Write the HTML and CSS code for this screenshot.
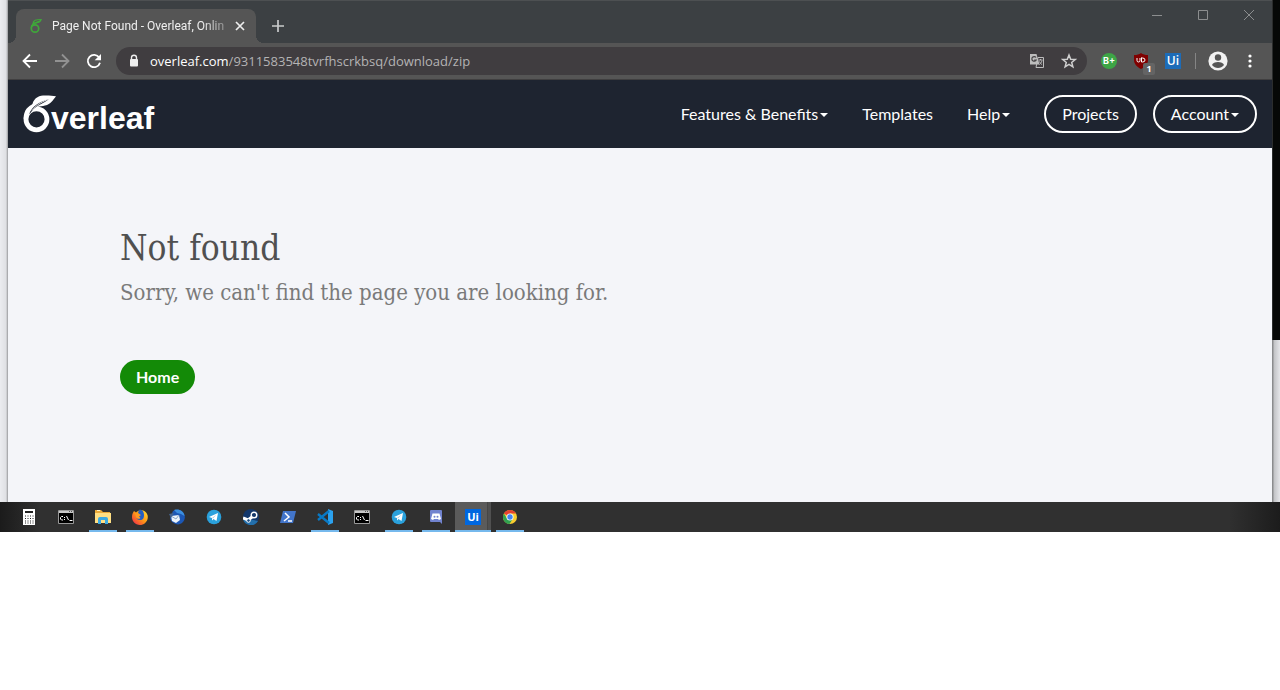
FILE: index.html
```html
<!DOCTYPE html>
<html lang="en">
<head>
<meta charset="utf-8">
<meta name="viewport" content="width=device-width, initial-scale=1">
<title>Page Not Found - Overleaf, Online LaTeX Editor</title>
<link rel="stylesheet" href="styles.css">
</head>
<body>
<div class="desktop">
  <div class="window">
    <header class="titlebar">
      <div class="tab">
        <svg class="tab-icon" width="16" height="16" viewBox="0 0 16 16" fill="none" stroke="#3fa83a">
          <circle cx="7" cy="10.500" r="3.700" stroke-width="1.700"/>
          <path d="M3.200 10C3 6 7 4.500 11.500 3.500" stroke-width="1.300"/>
          <path d="M5 5.500C5 2.500 8 1.500 13.200 1.500C12.500 4 10 5 5 5.500Z" stroke-width="1.100"/>
        </svg>
        <span class="tab-title">Page Not Found - Overleaf, Onlin</span>
        <button class="tab-close" aria-label="Close tab"><svg width="10" height="10" viewBox="0 0 10 10" stroke="#eee" stroke-width="1.700"><path d="M1 1l8 8M9 1l-8 8"/></svg></button>
      </div>
      <button class="new-tab" aria-label="New tab"><svg width="12" height="12" viewBox="0 0 12 12" stroke="#c9cbcc" stroke-width="1.700"><path d="M6 0v12M0 6h12"/></svg></button>
      <div class="window-controls">
        <button aria-label="Minimize"><svg width="10" height="10" viewBox="0 0 10 10" stroke="#8c8e8f"><path d="M0 5.500h10"/></svg></button>
        <button aria-label="Maximize"><svg width="10" height="10" viewBox="0 0 10 10" fill="none" stroke="#8c8e8f"><path d="M.5.5h9v9h-9z"/></svg></button>
        <button aria-label="Close"><svg width="10" height="10" viewBox="0 0 10 10" stroke="#8c8e8f"><path d="M0 0l10 10M10 0L0 10"/></svg></button>
      </div>
    </header>

    <div class="toolbar">
      <button class="tool" aria-label="Back"><svg width="16" height="16" viewBox="0 0 16 16" fill="none" stroke="#fff" stroke-width="1.800"><path d="M15 8H2M8 1.500L1.500 8L8 14.500"/></svg></button>
      <button class="tool" aria-label="Forward"><svg width="16" height="16" viewBox="0 0 16 16" fill="none" stroke="#929292" stroke-width="1.800"><path d="M1 8h13M8 1.500L14.500 8L8 14.500"/></svg></button>
      <button class="tool" aria-label="Reload"><svg width="16" height="16" viewBox="0 0 16 16" fill="none" stroke="#fff" stroke-width="1.800"><path d="M13.200 4.500A6.200 6.200 0 1 0 14 9.800"/><path d="M15 1v6.300H8.700z" fill="#fff" stroke="none"/></svg></button>
      <div class="omnibox">
        <svg width="12" height="14" viewBox="0 0 12 14"><path d="M3.500 6V3.700a2.500 2.500 0 0 1 5 0V6" fill="none" stroke="#eee" stroke-width="1.400"/><rect x="2" y="5" width="8" height="7.500" rx="1" fill="#eee"/></svg>
        <div class="address">
          <label for="address">overleaf.com</label>
          <input id="address" type="text" value="/9311583548tvrfhscrkbsq/download/zip" spellcheck="false">
        </div>
        <button class="tool" aria-label="Translate this page"><svg width="14" height="14" viewBox="0 0 14 14"><path d="M8 3.500h5.500v10H6z" fill="none" stroke="#bcbcbc"/><path d="M0 0h6.500l3 10.500H0z" fill="#bcbcbc"/><path d="M6 3.500A2.300 2.300 0 1 0 6.200 6H4.200" fill="none" stroke="#464446" stroke-width="1.200"/><path d="M8.500 6h4M10.500 5v1M12 6.500c-.5 2-1.500 3-2.500 4M9.500 7.500c.5 1.500 1.500 2.500 2.500 3" fill="none" stroke="#bcbcbc"/></svg></button>
        <button class="tool" aria-label="Bookmark this page"><svg width="16" height="16" viewBox="0 0 16 16" fill="none" stroke="#cfcfcf" stroke-width="1.500"><path d="M8 2l1.700 4.200 4.500.3-3.500 2.900 1.200 4.400L8 11.400l-3.900 2.400 1.200-4.400L1.800 6.500l4.500-.3z"/></svg></button>
      </div>
      <button class="tool" aria-label="B+ extension"><span class="ext-b">B+</span></button>
      <button class="tool ext-shield" aria-label="Ad blocker"><svg width="16" height="16" viewBox="0 0 16 16"><path d="M8 0c2 1.500 4 2 7 2v5c0 4-3 7-7 9c-4-2-7-5-7-9V2c3 0 5-.5 7-2z" fill="#800000"/><path d="M4 5v2.500q0 1.500 1.500 1.500T7 7.500V5M8.500 4.500V9h1q2.500 0 2.500-2T9.500 5h-1" fill="none" stroke="#fff"/></svg><span class="badge">1</span></button>
      <button class="tool" aria-label="UiPath"><span class="ext-ui">Ui</span></button>
      <span class="divider"></span>
      <button class="tool" aria-label="Profile"><svg width="20" height="20" viewBox="0 0 20 20"><circle cx="10" cy="10" r="9.600" fill="#f1f1f1"/><circle cx="10" cy="6.500" r="3.200" fill="#555"/><path d="M4 14c1-4 11-4 12 0c-3 4-9 4-12 0z" fill="#555"/></svg></button>
      <button class="tool" aria-label="Menu"><svg width="4" height="14" viewBox="0 0 4 14" fill="#fff"><circle cx="2" cy="2" r="1.600"/><circle cx="2" cy="7" r="1.600"/><circle cx="2" cy="12" r="1.600"/></svg></button>
    </div>

    <nav class="navbar">
      <a class="brand" href="#" aria-label="Overleaf">
        <svg width="136" height="44" viewBox="0 -2 136 44">
          <circle cx="13.500" cy="25.300" r="10.500" fill="none" stroke="#fff" stroke-width="4.800"/>
          <path d="M.7 25C.5 16 5 12 11 9.500L15 14C10 14.500 6 17 4 23z" fill="#fff"/>
          <path d="M9 13C9.500 5 15 2 20 1.600C25 1 29 2 33 2.200C30 6 28 10 22 11.500C17 13 12 12 8 17z" fill="#fff"/>
          <path d="M6 20.500C9 12 16 8 26 5C20 10 13 11.500 9 17z" fill="#1e2430"/>
          <path d="M9 16.500C14 10 20 7.500 27 4.500" fill="none" stroke="#fff" stroke-width=".8"/>
          <text class="brand-text" x="28" y="35">verleaf</text>
        </svg>
      </a>
      <div class="nav-links">
        <a href="#">Features &amp; Benefits<span class="caret"></span></a>
        <a href="#">Templates</a>
        <a href="#">Help<span class="caret"></span></a>
        <div class="nav-pills">
          <a class="pill" href="#">Projects</a>
          <a class="pill" href="#">Account<span class="caret"></span></a>
        </div>
      </div>
    </nav>

    <main class="content">
      <h1>Not found</h1>
      <p>Sorry, we can't find the page you are looking for.</p>
      <a class="home" href="#">Home</a>
    </main>
  </div>
  <div class="backdrop"></div>
</div>

<footer class="taskbar">
  <button class="task" aria-label="Calculator"><svg width="16" height="16" viewBox="0 0 16 16"><path d="M2 0h12v16H2z" fill="#fff"/><path d="M4 2h8v2H4z" fill="#222"/><path d="M4 7h9M4 9.500h9M4 12h9M4 14h9" stroke="#222" stroke-dasharray="1 1.500"/></svg></button>
  <button class="task" aria-label="Command Prompt"><svg width="16" height="14" viewBox="0 0 16 14"><path d="M.5.5h15v13H.5z" stroke="#999"/><path d="M1 1h14v2H1z" fill="#c8c8c8"/><path d="M11 1.500h1M13 1.500h1" stroke="#555"/><path d="M5 6.500H3.500L2.500 7.500V9l1 1H5M6.500 7v1M6.500 9v1M8.500 6l2 4M11.500 10.500h3" fill="none" stroke="#fff"/></svg></button>
  <button class="task open" aria-label="File Explorer"><svg width="16" height="16" viewBox="0 0 16 16"><path d="M0 1h6l2 2h7v4H0z" fill="#e8a93a"/><path d="M2 1h3v1H2z" fill="#fff2c4"/><path d="M0 4h16v10H0z" fill="#ffdf83"/><path d="M3 15V10q0-2 2-2h6q2 0 2 2v5h-3v-4H6v4z" fill="#3ca9e2"/></svg></button>
  <button class="task open" aria-label="Firefox"><svg width="16" height="16" viewBox="0 0 16 16"><defs><linearGradient id="fox" x1="1" y1="0" x2="0" y2="1"><stop offset="0" stop-color="#ffe135"/><stop offset=".5" stop-color="#ff9416"/><stop offset="1" stop-color="#ed1c52"/></linearGradient></defs><path d="M2 2l2 1.500C8-.5 14 1 15.500 6C17 12 12 16 8 16C3 16 0 12 0 8C0 5 1 3.500 2 2z" fill="url(#fox)"/><path d="M7 1c3-1 5 2 5 5c0 3-1 5-4 5c-2 0-3-1-3.500-2L8 8.500L6 7l2.500-1L6 4z" fill="#225fc4"/><path d="M3 4l3 .5L9 6L7 7.500L8.500 9C7 10.500 5 10 4 8z" fill="#ff9a22"/></svg></button>
  <button class="task" aria-label="Thunderbird"><svg width="16" height="16" viewBox="0 0 16 16"><path d="M4 2C8-.5 14 1 15.500 6C17 11 13 15 9 15.500C5 15 2 13 1 9z" fill="#1c57b5"/><path d="M5 1C10-.5 15 2 15.500 7L12 5L8 4z" fill="#3c8fe0"/><path d="M2 7l8-1l1 5l-4 3l-4-2z" fill="#edf4fb"/><path d="M2 7l5 3l3-4" fill="none" stroke="#8ca9c8"/><path d="M0 5l5-1L2 9z" fill="#45658f"/></svg></button>
  <button class="task" aria-label="Telegram"><svg width="16" height="16" viewBox="0 0 16 16"><circle cx="8" cy="8" r="7.300" fill="#2aa1dc"/><path d="M3 8l9-4l-1.500 8l-3-2L6 11.500V9z" fill="#fff"/><path d="M6 9l4.500-3.500L7 9.500z" fill="#a9c9dd"/></svg></button>
  <button class="task" aria-label="Steam"><svg width="16" height="16" viewBox="0 0 16 16"><circle cx="8" cy="8" r="8" fill="#14386b"/><path d="M0 9a8 8 0 0 0 15 3z" fill="#236fab"/><path d="M0 9l5 2l4-3" fill="none" stroke="#fff" stroke-width="3"/><circle cx="5.500" cy="11.500" r="1.800" fill="#194d83" stroke="#fff"/><circle cx="11" cy="6" r="2.800" fill="#14386b" stroke="#fff" stroke-width="1.400"/></svg></button>
  <button class="task" aria-label="PowerShell"><svg width="16" height="14" viewBox="0 0 16 14"><path d="M3 1h13l-3 12H0z" fill="#4275ca"/><path d="M5 3l4 4l-5 4M8 11h4" fill="none" stroke="#fff" stroke-width="1.500"/></svg></button>
  <button class="task open" aria-label="Visual Studio Code"><svg width="16" height="16" viewBox="0 0 16 16"><path d="M11 0l5 2v12l-5 2z" fill="#2ba1ee"/><path d="M1 5l11 9M1 11L12 2" stroke="#0879c5" stroke-width="2.400"/></svg></button>
  <button class="task" aria-label="Command Prompt"><svg width="16" height="14" viewBox="0 0 16 14"><path d="M.5.5h15v13H.5z" stroke="#999"/><path d="M1 1h14v2H1z" fill="#c8c8c8"/><path d="M11 1.500h1M13 1.500h1" stroke="#555"/><path d="M5 6.500H3.500L2.500 7.500V9l1 1H5M6.500 7v1M6.500 9v1M8.500 6l2 4M11.500 10.500h3" fill="none" stroke="#fff"/></svg></button>
  <button class="task open" aria-label="Telegram"><svg width="16" height="16" viewBox="0 0 16 16"><circle cx="8" cy="8" r="7.300" fill="#2aa1dc"/><path d="M3 8l9-4l-1.500 8l-3-2L6 11.500V9z" fill="#fff"/><path d="M6 9l4.500-3.500L7 9.500z" fill="#a9c9dd"/></svg></button>
  <button class="task open" aria-label="Discord"><svg width="14" height="16" viewBox="0 0 14 16"><path d="M2 1h10q1 0 1 1v13l-2-2H2q-1 0-1-1V2q0-1 1-1z" fill="#7183cf"/><path d="M3.500 4.500h7L12 10l-2 1-1-1H5l-1 1-2-1z" fill="#fff"/><circle cx="5.500" cy="7.700" r="1" fill="#7183cf"/><circle cx="8.500" cy="7.700" r="1" fill="#7183cf"/></svg></button>
  <button class="task open active" aria-label="UiPath"><span class="task-ui">Ui</span></button>
  <button class="task open" aria-label="Chrome"><svg width="16" height="16" viewBox="0 0 16 16"><circle cx="8" cy="8" r="7" fill="#f9cc2f"/><path d="M8 8L1.900 4.500A7 7 0 0 1 14.100 4.500H8z" fill="#e44132"/><path d="M1.900 4.500A7 7 0 0 0 7.500 15L11 9.500L8 8L5 9.500z" fill="#30a150"/><circle cx="8" cy="8" r="3.500" fill="#fff"/><circle cx="8" cy="8" r="2.700" fill="#4285f4"/></svg></button>
</footer>
</body>
</html>
```
FILE: styles.css
```css
* { box-sizing: border-box; }

body {
  margin: 0;
  background: #fff;
  font-family: Lato, sans-serif;
  font-size: 16px;
}

button {
  display: flex;
  align-items: center;
  justify-content: center;
  margin: 0;
  padding: 0;
  border: 0;
  background: none;
  color: #fff;
}

svg { display: block; flex: none; }
a { text-decoration: none; }

.desktop {
  display: flex;
  padding-left: 8px;
  background: linear-gradient(to right, #ebecf0, #dfe0e4 6px, #999a9d 8px, #999a9d);
}

.window {
  flex: 1;
  min-width: 0;
  background: #f4f5f9;
}

.backdrop {
  width: 8px;
  background:
    linear-gradient(to right, #2b2d2d 1px, #060807 1px) top / 100% 340px no-repeat,
    linear-gradient(to right, #8b8c8e 1px, #c2c3c6 2px, #e4e5e9);
}

/* Browser frame */
.titlebar {
  display: flex;
  height: 43px;
  border-top: 1px solid #4d5052;
  background: #3c4043;
  font-family: "Open Sans", sans-serif;
}

.titlebar::before,
.tab + .new-tab::before {
  content: "";
  align-self: flex-end;
  flex: none;
  width: 8px;
  height: 8px;
  background: radial-gradient(circle at 0 0, #3c4043 8px, #555 8px);
}

.tab {
  display: flex;
  align-items: center;
  align-self: flex-end;
  width: 240px;
  height: 34px;
  padding: 0 8px 0 12px;
  border-radius: 8px 8px 0 0;
  background: #555;
}

.tab-title {
  flex: 1;
  margin-left: 8px;
  color: #f0f0f0;
  font-family: Roboto, sans-serif;
  font-size: 12px;
  white-space: nowrap;
  -webkit-mask-image: linear-gradient(to right, #000 85%, #0004);
  mask-image: linear-gradient(to right, #000 85%, #0004);
}

.tab-close { width: 16px; height: 16px; margin-left: 4px; }

.new-tab {
  align-self: flex-end;
  justify-content: flex-start;
  gap: 8px;
  width: 36px;
  height: 34px;
}

.tab + .new-tab::before { background: radial-gradient(circle at 100% 0, #3c4043 8px, #555 8px); }

.window-controls { display: flex; margin-left: auto; }
.window-controls button { width: 46px; height: 28px; }

.toolbar {
  display: flex;
  align-items: center;
  height: 37px;
  padding: 0 6px;
  border-bottom: 1px solid #403f40;
  background: #555;
  font-family: "Open Sans", sans-serif;
}

.tool { flex: none; width: 32px; height: 28px; }

.omnibox {
  display: flex;
  flex: 1;
  align-items: center;
  height: 28px;
  margin: 0 6px;
  padding: 0 2px 0 12px;
  border-radius: 14px;
  background: #403d40;
}

.address {
  display: flex;
  flex: 1;
  align-items: center;
  margin-left: 10px;
  color: #fff;
  font-size: 13px;
}

.address input {
  flex: 1;
  min-width: 0;
  padding: 0;
  border: 0;
  outline: 0;
  background: none;
  color: #b4b3b4;
  font: inherit;
}

.ext-b, .ext-ui, .task-ui {
  width: 16px;
  height: 16px;
  color: #fff;
  font-weight: 700;
  line-height: 16px;
  text-align: center;
}

.ext-b { border-radius: 50%; background: #3da546; font-family: Inter, sans-serif; font-size: 9px; }
.ext-ui { background: #1d6cb8; font-family: "Open Sans", sans-serif; font-size: 12px; font-weight: 600; }
.task-ui { background: #0067df; font-family: "Open Sans", sans-serif; font-size: 11px; }

.ext-shield { position: relative; }

.badge {
  position: absolute;
  right: 2px;
  bottom: 0;
  width: 12px;
  height: 12px;
  border-radius: 2px;
  background: #646464;
  font-family: "Open Sans", sans-serif;
  font-size: 9px;
  font-weight: 700;
  line-height: 12px;
}

.divider { width: 1px; height: 16px; margin: 0 6px; background: #858585; }

/* Site */
.navbar {
  display: flex;
  align-items: center;
  justify-content: space-between;
  height: 68px;
  padding: 0 15px;
  background: #1e2430;
}

.brand-text {
  fill: #fff;
  font-family: "Liberation Sans", sans-serif;
  font-size: 32px;
  font-weight: 700;
}

.nav-links { display: flex; align-items: center; gap: 34px; }
.nav-links a { display: flex; align-items: center; padding-bottom: 2px; color: #fff; }
.nav-pills { display: flex; gap: 16px; }

.nav-links .pill {
  height: 38px;
  padding: 0 16px 2px;
  border: 2px solid #fff;
  border-radius: 19px;
}

.caret {
  margin: 4px 0 0 2px;
  border: 4px solid transparent;
  border-top-color: #fff;
  border-bottom-width: 0;
}

.content { padding: 80px 112px 108px; }

h1, .content p {
  margin: 0;
  font-family: "DejaVu Serif Condensed", "DejaVu Serif", serif;
  font-weight: 400;
}

h1 { color: #505050; font-size: 35px; line-height: 40px; }
.content p { margin: 8px 0 50px; color: #7a7a7a; font-size: 22px; line-height: 34px; }

.home {
  display: inline-block;
  padding: 0 16px;
  border-radius: 17px;
  background: #138a07;
  color: #fff;
  font-weight: 700;
  line-height: 34px;
  vertical-align: top;
}

/* Taskbar */
.taskbar {
  display: flex;
  gap: 9px;
  height: 30px;
  padding-left: 15px;
  background: linear-gradient(to right, #1b1b1b, #303030 40px, #303030 96%, #1c1c1c);
}

.task { flex: none; width: 28px; border-bottom: 2px solid transparent; padding-top: 2px; }
.task.open { border-color: #76b9ed; }

.task.active {
  width: 36px;
  margin: 0 -4px;
  background: linear-gradient(to right, #5b5b5b 32px, #3d3d3d 32px, #505050 33px);
}
```
